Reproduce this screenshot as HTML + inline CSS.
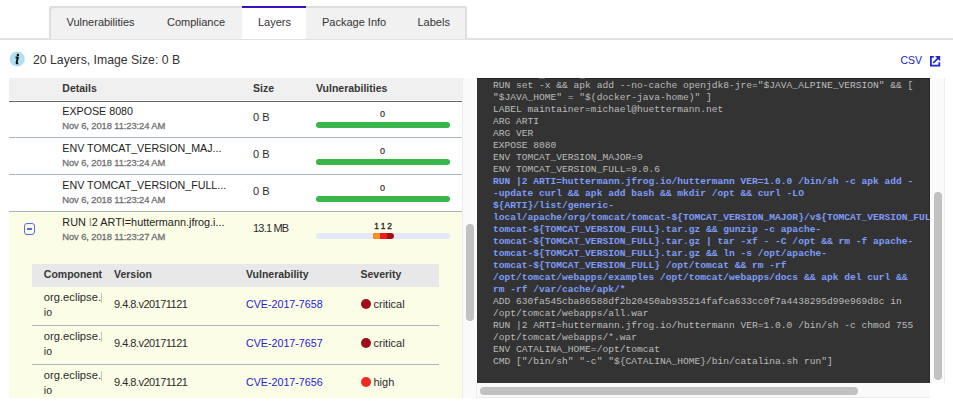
<!DOCTYPE html>
<html><head><meta charset="utf-8"><style>
html,body{margin:0;padding:0;background:#fff;}
body{width:953px;height:406px;overflow:hidden;position:relative;font-family:"Liberation Sans", sans-serif;}
body>div,body>svg{position:absolute;}
.t{white-space:nowrap;}
.code{background:#333;overflow:hidden;box-shadow:inset 0 1px 0 #242424,inset 1px 0 0 #2d2d2d,inset -1px 0 0 #2a2a2a;}
.code pre{position:absolute;left:16px;margin:0;font-family:"Liberation Mono", monospace;font-size:9.6px;line-height:12px;color:#bcbcbc;white-space:pre;}
.hl{color:#7d9cf8;font-weight:700;}
</style></head><body>
<div style="left:0px;top:38px;width:953px;height:2px;background:#e2e2e2"></div>
<div style="left:49px;top:6px;width:418px;height:33px;background:#f1f1f1;border-radius:3px 3px 0 0;box-shadow:inset 2px 2px 0 #dedede,inset -2px 0 0 #dedede"></div>
<div style="left:242px;top:6px;width:64px;height:33px;background:#fff"></div>
<div style="left:242px;top:6px;width:64px;height:2px;background:#3c10c0"></div>
<div class="t" style="left:66.5px;top:16.69px;font-size:11px;line-height:11px;color:#333;font-weight:400;">Vulnerabilities</div>
<div class="t" style="left:167px;top:16.69px;font-size:11px;line-height:11px;color:#333;font-weight:400;">Compliance</div>
<div class="t" style="left:258px;top:16.69px;font-size:11px;line-height:11px;color:#333;font-weight:400;">Layers</div>
<div class="t" style="left:322px;top:16.69px;font-size:11px;line-height:11px;color:#333;font-weight:400;">Package Info</div>
<div class="t" style="left:417.5px;top:16.69px;font-size:11px;line-height:11px;color:#333;font-weight:400;">Labels</div>
<svg style="left:9px;top:51px" width="16" height="16" viewBox="0 0 16 16"><circle cx="8.2" cy="8" r="7.6" fill="#aee0f2"/><circle cx="8.9" cy="4.1" r="1.25" fill="#111"/><path d="M6.6 6.5H8.9L7.6 11.6Q7.4 12.6 9.2 12.2" fill="none" stroke="#111" stroke-width="1.9" stroke-linejoin="round"/></svg>
<div class="t" style="left:33px;top:54.13px;font-size:12.25px;line-height:12.25px;color:#333;font-weight:400;">20 Layers, Image Size: 0 B</div>
<div class="t" style="left:900.5px;top:55.11px;font-size:10.5px;line-height:10.5px;color:#2020d0;font-weight:400;">CSV</div>
<svg style="left:930px;top:56px" width="11" height="11" viewBox="0 0 11 11"><path d="M3.8 0.9H0.9V9.7H9.3V6.2" fill="none" stroke="#1b26d4" stroke-width="1.8"/><path d="M5 0H10.2V5.2Z" fill="#1b26d4"/><path d="M3.2 7L8.4 1.8" stroke="#1b26d4" stroke-width="1.7"/></svg>
<div style="left:9px;top:78px;width:453px;height:22px;background:#f0f0f0"></div>
<div style="left:9px;top:101px;width:453px;height:1px;background:#666"></div>
<div class="t" style="left:62.3px;top:83.11px;font-size:10.5px;line-height:10.5px;color:#363636;font-weight:700;">Details</div>
<div class="t" style="left:253px;top:83.11px;font-size:10.5px;line-height:10.5px;color:#363636;font-weight:700;">Size</div>
<div class="t" style="left:316px;top:83.11px;font-size:10.5px;line-height:10.5px;color:#363636;font-weight:700;">Vulnerabilities</div>
<div class="t" style="left:62.3px;top:105.94px;font-size:10.7px;line-height:10.7px;color:#222;font-weight:400;">EXPOSE 8080</div>
<div class="t" style="left:62.3px;top:120.64px;font-size:9.4px;line-height:9.4px;color:#727272;font-weight:400;letter-spacing:-0.1px;-webkit-text-stroke:0.3px #727272;">Nov 6, 2018 11:23:24 AM</div>
<div class="t" style="left:253px;top:111.69px;font-size:11px;line-height:11px;color:#2b2b2b;font-weight:400;">0 B</div>
<div class="t" style="left:380px;top:110.18px;font-size:9px;line-height:9px;color:#2b2b2b;font-weight:400;-webkit-text-stroke:0.2px #2b2b2b;">0</div>
<div style="left:316px;top:122px;width:134px;height:6px;background:#39b54a;border-radius:3px"></div>
<div class="t" style="left:62.3px;top:142.94px;font-size:10.7px;line-height:10.7px;color:#222;font-weight:400;">ENV TOMCAT_VERSION_MAJ...</div>
<div class="t" style="left:62.3px;top:157.64px;font-size:9.4px;line-height:9.4px;color:#727272;font-weight:400;letter-spacing:-0.1px;-webkit-text-stroke:0.3px #727272;">Nov 6, 2018 11:23:24 AM</div>
<div class="t" style="left:253px;top:148.69px;font-size:11px;line-height:11px;color:#2b2b2b;font-weight:400;">0 B</div>
<div class="t" style="left:380px;top:147.18px;font-size:9px;line-height:9px;color:#2b2b2b;font-weight:400;-webkit-text-stroke:0.2px #2b2b2b;">0</div>
<div style="left:316px;top:159px;width:134px;height:6px;background:#39b54a;border-radius:3px"></div>
<div class="t" style="left:62.3px;top:179.94px;font-size:10.7px;line-height:10.7px;color:#222;font-weight:400;">ENV TOMCAT_VERSION_FULL...</div>
<div class="t" style="left:62.3px;top:194.64px;font-size:9.4px;line-height:9.4px;color:#727272;font-weight:400;letter-spacing:-0.1px;-webkit-text-stroke:0.3px #727272;">Nov 6, 2018 11:23:24 AM</div>
<div class="t" style="left:253px;top:185.69px;font-size:11px;line-height:11px;color:#2b2b2b;font-weight:400;">0 B</div>
<div class="t" style="left:380px;top:184.18px;font-size:9px;line-height:9px;color:#2b2b2b;font-weight:400;-webkit-text-stroke:0.2px #2b2b2b;">0</div>
<div style="left:316px;top:196px;width:134px;height:6px;background:#39b54a;border-radius:3px"></div>
<div style="left:9px;top:137px;width:453px;height:1px;background:#aab5bc"></div>
<div style="left:9px;top:174px;width:453px;height:1px;background:#aab5bc"></div>
<div style="left:9px;top:211px;width:453px;height:1px;background:#aab5bc"></div>
<div style="left:9px;top:212px;width:453px;height:186px;background:#fcfde7"></div>
<svg style="left:24px;top:223px" width="12" height="12" viewBox="0 0 12 12"><rect x="0.5" y="0.5" width="10" height="11" rx="2.5" fill="none" stroke="#5a6ae2" stroke-width="1"/><rect x="3" y="5" width="5" height="2" fill="#5566e0"/></svg>
<div class="t" style="left:62.3px;top:216.82px;font-size:10.85px;line-height:10.85px;color:#222;font-weight:400;">RUN <span style="color:#888">I</span>2 ARTI=huttermann.jfrog.i...</div>
<div class="t" style="left:62.3px;top:231.54px;font-size:9.4px;line-height:9.4px;color:#727272;font-weight:400;letter-spacing:-0.1px;-webkit-text-stroke:0.3px #727272;">Nov 6, 2018 11:23:27 AM</div>
<div class="t" style="left:253px;top:222.69px;font-size:11px;line-height:11px;color:#2b2b2b;font-weight:400;letter-spacing:-0.8px;">13.1 MB</div>
<div style="left:316px;top:233px;width:134px;height:6px;background:#e4e8f8;border-radius:3px"></div>
<div style="left:373px;top:233px;width:21px;height:6px;background:#a50f1a;border-radius:3px;overflow:hidden"></div>
<div style="left:373px;top:233px;width:14px;height:6px;background:#ed1c24;border-radius:3px 0 0 3px"></div>
<div style="left:373px;top:233px;width:7px;height:6px;background:#f7931e;border-radius:3px 0 0 3px"></div>
<div class="t" style="left:374.2px;top:222.19px;font-size:8.4px;line-height:8.4px;color:#2b2b2b;font-weight:400;-webkit-text-stroke:0.35px #2b2b2b;">1</div>
<div class="t" style="left:380.7px;top:222.19px;font-size:8.4px;line-height:8.4px;color:#2b2b2b;font-weight:400;-webkit-text-stroke:0.35px #2b2b2b;">1</div>
<div class="t" style="left:387.3px;top:222.19px;font-size:8.4px;line-height:8.4px;color:#2b2b2b;font-weight:400;-webkit-text-stroke:0.35px #2b2b2b;">2</div>
<div style="left:32px;top:264px;width:407px;height:23px;background:#e8e8e8"></div>
<div class="t" style="left:43.8px;top:269.11px;font-size:10.5px;line-height:10.5px;color:#363636;font-weight:700;">Component</div>
<div class="t" style="left:114px;top:269.11px;font-size:10.5px;line-height:10.5px;color:#363636;font-weight:700;">Version</div>
<div class="t" style="left:246px;top:269.11px;font-size:10.5px;line-height:10.5px;color:#363636;font-weight:700;">Vulnerability</div>
<div class="t" style="left:360.5px;top:269.11px;font-size:10.5px;line-height:10.5px;color:#363636;font-weight:700;">Severity</div>
<div class="t" style="left:43.8px;top:291.72px;font-size:11.2px;line-height:11.2px;color:#2b2b2b;font-weight:400;">org.eclipse.</div>
<div style="left:101px;top:293px;width:1px;height:10px;background:#c9c3b0"></div>
<div class="t" style="left:43.8px;top:306.61px;font-size:10.5px;line-height:10.5px;color:#2b2b2b;font-weight:400;">io</div>
<div class="t" style="left:114px;top:298.69px;font-size:11px;line-height:11px;color:#2b2b2b;font-weight:400;letter-spacing:-0.52px;">9.4.8.v20171121</div>
<div class="t" style="left:246px;top:299.44px;font-size:10.7px;line-height:10.7px;color:#1e22d0;font-weight:400;">CVE-2017-7658</div>
<div style="left:360.5px;top:299px;width:10px;height:10px;background:#a00d1a;border-radius:50%"></div>
<div class="t" style="left:373.5px;top:299.19px;font-size:11px;line-height:11px;color:#2b2b2b;font-weight:400;">critical</div>
<div class="t" style="left:43.8px;top:330.72px;font-size:11.2px;line-height:11.2px;color:#2b2b2b;font-weight:400;">org.eclipse.</div>
<div style="left:101px;top:332px;width:1px;height:10px;background:#c9c3b0"></div>
<div class="t" style="left:43.8px;top:345.61px;font-size:10.5px;line-height:10.5px;color:#2b2b2b;font-weight:400;">io</div>
<div class="t" style="left:114px;top:337.69px;font-size:11px;line-height:11px;color:#2b2b2b;font-weight:400;letter-spacing:-0.52px;">9.4.8.v20171121</div>
<div class="t" style="left:246px;top:338.44px;font-size:10.7px;line-height:10.7px;color:#1e22d0;font-weight:400;">CVE-2017-7657</div>
<div style="left:360.5px;top:338px;width:10px;height:10px;background:#a00d1a;border-radius:50%"></div>
<div class="t" style="left:373.5px;top:338.19px;font-size:11px;line-height:11px;color:#2b2b2b;font-weight:400;">critical</div>
<div class="t" style="left:43.8px;top:369.72px;font-size:11.2px;line-height:11.2px;color:#2b2b2b;font-weight:400;">org.eclipse.</div>
<div style="left:101px;top:371px;width:1px;height:10px;background:#c9c3b0"></div>
<div class="t" style="left:43.8px;top:384.61px;font-size:10.5px;line-height:10.5px;color:#2b2b2b;font-weight:400;">io</div>
<div class="t" style="left:114px;top:376.69px;font-size:11px;line-height:11px;color:#2b2b2b;font-weight:400;letter-spacing:-0.52px;">9.4.8.v20171121</div>
<div class="t" style="left:246px;top:377.44px;font-size:10.7px;line-height:10.7px;color:#1e22d0;font-weight:400;">CVE-2017-7656</div>
<div style="left:360.5px;top:377px;width:10px;height:10px;background:#ee2a24;border-radius:50%"></div>
<div class="t" style="left:373.5px;top:377.19px;font-size:11px;line-height:11px;color:#2b2b2b;font-weight:400;">high</div>
<div style="left:32px;top:325px;width:407px;height:1px;background:#aab5bc"></div>
<div style="left:32px;top:364px;width:407px;height:1px;background:#aab5bc"></div>
<div style="left:462px;top:78px;width:14px;height:320px;background:#fafafa;box-shadow:inset 1px 0 0 #ececec"></div>
<div style="left:466px;top:224px;width:8px;height:97px;background:#c1c1c1;border-radius:4px"></div>
<div style="left:476px;top:383px;width:454px;height:15px;background:#fafafa;box-shadow:inset 1px 0 0 #ececec,inset 0 -1px 0 #ececec"></div>
<div style="left:930px;top:78px;width:15px;height:305px;background:#fafafa;box-shadow:inset -1px 0 0 #ececec"></div>
<div class="code" style="left:477px;top:78px;width:453px;height:305px;"><pre style="top:-10px">ENV JAVA_ALPINE_VERSION=8.151.12-r0
RUN set -x &amp;&amp; apk add --no-cache openjdk8-jre=&quot;$JAVA_ALPINE_VERSION&quot; &amp;&amp; [
&quot;$JAVA_HOME&quot; = &quot;$(docker-java-home)&quot; ]
LABEL maintainer=michael@huettermann.net
ARG ARTI
ARG VER
EXPOSE 8080
ENV TOMCAT_VERSION_MAJOR=9
ENV TOMCAT_VERSION_FULL=9.0.6
<span class="hl">RUN |2 ARTI=huttermann.jfrog.io/huttermann VER=1.0.0 /bin/sh -c apk add -</span>
<span class="hl">-update curl &amp;&amp; apk add bash &amp;&amp; mkdir /opt &amp;&amp; curl -LO</span>
<span class="hl">${ARTI}/list/generic-</span>
<span class="hl">local/apache/org/tomcat/tomcat-${TOMCAT_VERSION_MAJOR}/v${TOMCAT_VERSION_FULL}/apache-</span>
<span class="hl">tomcat-${TOMCAT_VERSION_FULL}.tar.gz &amp;&amp; gunzip -c apache-</span>
<span class="hl">tomcat-${TOMCAT_VERSION_FULL}.tar.gz | tar -xf - -C /opt &amp;&amp; rm -f apache-</span>
<span class="hl">tomcat-${TOMCAT_VERSION_FULL}.tar.gz &amp;&amp; ln -s /opt/apache-</span>
<span class="hl">tomcat-${TOMCAT_VERSION_FULL} /opt/tomcat &amp;&amp; rm -rf</span>
<span class="hl">/opt/tomcat/webapps/examples /opt/tomcat/webapps/docs &amp;&amp; apk del curl &amp;&amp;</span>
<span class="hl">rm -rf /var/cache/apk/*</span>
ADD 630fa545cba86588df2b20450ab935214fafca633cc0f7a4438295d99e969d8c in
/opt/tomcat/webapps/all.war
RUN |2 ARTI=huttermann.jfrog.io/huttermann VER=1.0.0 /bin/sh -c chmod 755
/opt/tomcat/webapps/*.war
ENV CATALINA_HOME=/opt/tomcat
CMD [&quot;/bin/sh&quot; &quot;-c&quot; &quot;${CATALINA_HOME}/bin/catalina.sh run&quot;]</pre></div>
<div style="left:539px;top:78px;width:6px;height:1px;background:#55556a"></div>
<div style="left:580px;top:78px;width:5px;height:1px;background:#55556a"></div>
<div style="left:934px;top:192px;width:8px;height:188px;background:#c1c1c1;border-radius:4px"></div>
<div style="left:480px;top:387px;width:378px;height:8px;background:#c1c1c1;border-radius:4px"></div>
</body></html>
